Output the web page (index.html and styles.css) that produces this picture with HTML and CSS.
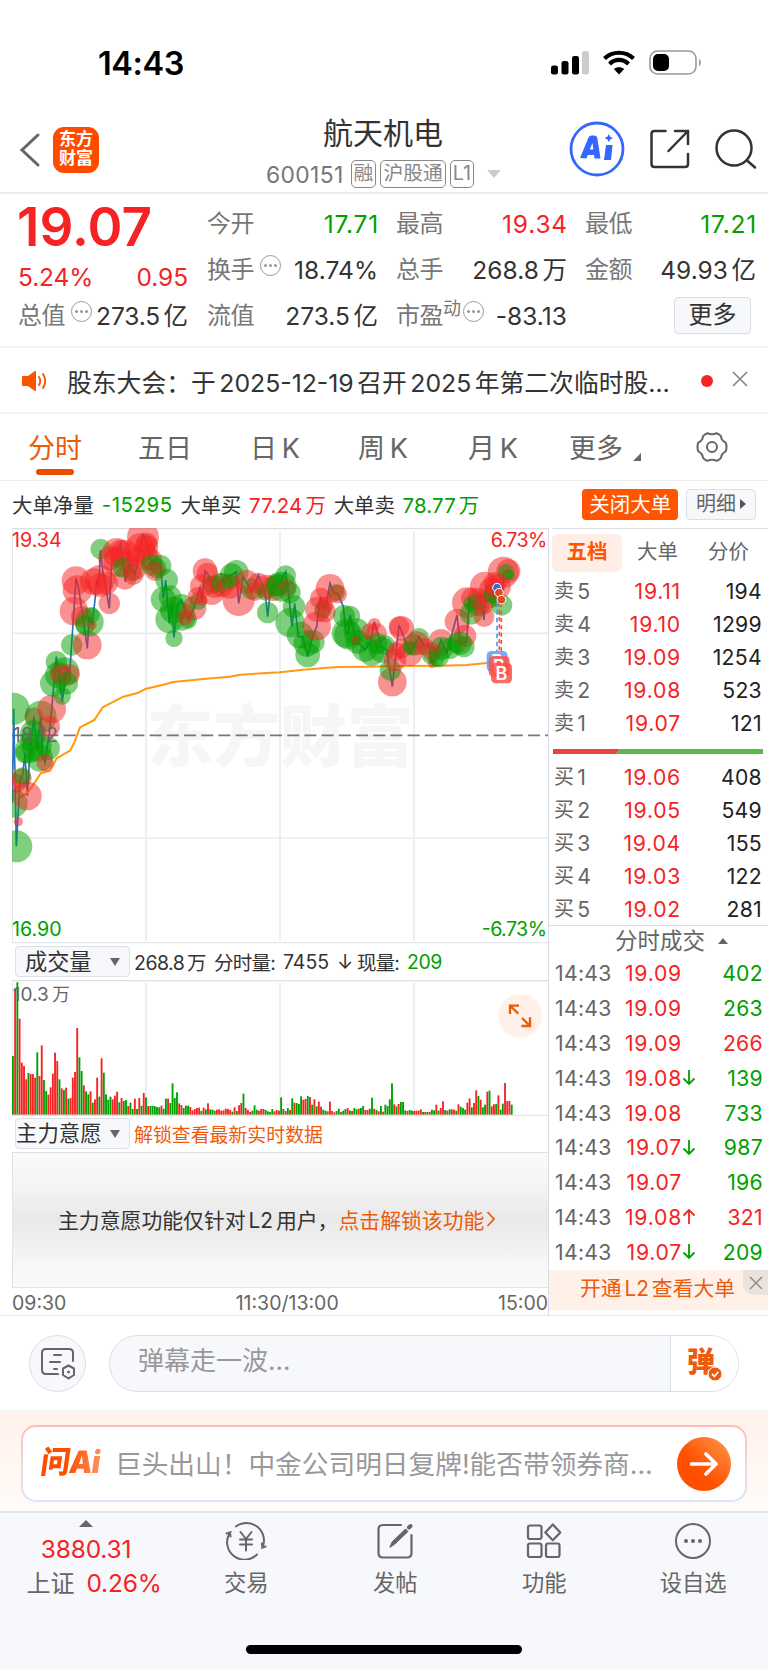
FILE: index.html
```html
<!DOCTYPE html>
<html lang="zh-CN">
<head>
<meta charset="utf-8">
<title>航天机电 600151</title>
<link rel="stylesheet" href="styles.css">
</head>
<body>
<div class="app">
  <header class="status">
    <span class="clock">14:43</span>
    <svg class="status-icons" width="154" height="26" viewBox="0 0 154 26">
      <rect x="0" y="15.500" width="7" height="9" rx="2.300"/><rect x="10.500" y="11" width="7" height="13.500" rx="2.300"/><rect x="21" y="6" width="7" height="18.500" rx="2.300"/><rect x="31" y="1" width="7" height="23.500" rx="2.300" fill="#ccc"/>
      <g fill="none" stroke="#000" stroke-width="4.200"><path d="M53.500 8.500 C61.500 .8 74.500 .8 82.500 8.500"/><path d="M58.500 14 C64 8.600 72 8.600 77.500 14"/></g>
      <path d="M68 24.500 L62.800 19 C65.500 16.800 70.500 16.800 73.200 19Z"/>
      <rect x="99" y="1" width="46" height="23" rx="7.500" fill="none" stroke="#999" stroke-width="1.600"/><rect x="102" y="4" width="16" height="17" rx="5"/><path d="M148 8.500 q3.500 4 0 8z" fill="#999"/>
    </svg>
  </header>

  <nav class="nav">
    <svg class="back" width="22" height="36" viewBox="0 0 22 36"><path d="M19 3 L3 18 L19 33" fill="none" stroke="#666" stroke-width="3" stroke-linecap="round"/></svg>
    <div class="logo"><span>东方</span><span>财富</span></div>
    <div class="title">
      <h1>航天机电</h1>
      <div class="sub"><span class="code">600151</span><b>融</b><b>沪股通</b><b>L1</b><i></i></div>
    </div>
    <svg class="nav-icons" width="190" height="58" viewBox="0 0 190 58">
      <circle cx="28" cy="29" r="26" fill="none" stroke="#3467ff" stroke-width="2.800"/>
      <path fill="#3467ff" fill-rule="evenodd" d="M11 38 L19.500 17.500 Q20.300 15.500 22.500 15.500 H25.500 Q28 15.500 28.300 18 L31.500 38.500 H25.500 L25 35 H18.800 L17.500 38.500ZM20.800 29.500 H24.300 L23.500 23Z"/>
      <path fill="#3467ff" d="M37 25 H43.500 L42 40 H35ZM39.800 14 L41.200 16.700 44 18 41.200 19.400 39.800 22 38.400 19.400 35.600 18 38.400 16.700Z"/>
      <g fill="none" stroke="#333" stroke-width="2.500" stroke-linecap="round"><path d="M96.500 11 H85.500 Q82.500 11 82.500 14 V44 Q82.500 47 85.500 47 H116 Q119 47 119 44 V34 M106 11 H119 V24 M118.500 11.500 L99.500 31"/><circle cx="165" cy="28" r="17.500"/><path d="M178 40.500 L186 47.500"/></g>
    </svg>
  </nav>

  <section class="quote">
    <div class="col first">
      <div class="price">19.07</div>
      <div class="row red"><span>5.24%</span><span>0.95</span></div>
      <div class="row"><label>总值</label><em></em><span>273.5<u>亿</u></span></div>
    </div>
    <div class="col">
      <div class="row"><label>今开</label><span class="green wide">17.71</span></div>
      <div class="row"><label>换手</label><em></em><span>18.74%</span></div>
      <div class="row"><label>流值</label><span>273.5<u>亿</u></span></div>
    </div>
    <div class="col">
      <div class="row"><label>最高</label><span class="red wide">19.34</span></div>
      <div class="row"><label>总手</label><span>268.8<u>万</u></span></div>
      <div class="row"><label>市盈<sup>动</sup></label><em class="tight"></em><span>-83.13</span></div>
    </div>
    <div class="col">
      <div class="row"><label>最低</label><span class="green wide">17.21</span></div>
      <div class="row"><label>金额</label><span>49.93<u>亿</u></span></div>
      <div class="row"><button class="more">更多</button></div>
    </div>
  </section>

  <section class="notice">
    <svg width="28" height="24" viewBox="0 0 28 24"><path fill="#fd5200" d="M2 7 H7 L13.500 2.200 Q15 1.200 15 3 V21 Q15 22.800 13.500 21.800 L7 17 H2 Q1 17 1 16 V8 Q1 7 2 7Z"/><path d="M18 8 Q20.500 12 18 16 M22 5 Q26.500 12 22 19" stroke="#fd5200" stroke-width="1.900" fill="none" stroke-linecap="round"/></svg>
    <span class="notice-text">股东大会：于<u>2025-12-19</u><u>召开</u><u>2025</u><u>年第二次临时股…</u></span>
    <i class="dot"></i>
    <svg width="16" height="16" viewBox="0 0 16 16"><path d="M1 1 L15 15 M15 1 L1 15" stroke="#888" stroke-width="1.700"/></svg>
  </section>

  <nav class="tabs">
    <span class="tab on">分时</span><span class="tab">五日</span><span class="tab">日<u>K</u></span><span class="tab">周<u>K</u></span><span class="tab">月<u>K</u></span><span class="tab corner">更多</span>
    <svg width="32" height="32" viewBox="-16 -16 32 32" fill="none" stroke="#666" stroke-width="2" stroke-linejoin="round"><path d="M-4.500 -13.800 Q0 -11.500 4.500 -13.800 Q7 -13 9 -10.800 Q9.300 -6.500 13.800 -4.300 Q15.200 0 13.800 4.300 Q9.300 6.500 9 10.800 Q7 13 4.500 13.800 Q0 11.500 -4.500 13.800 Q-7 13 -9 10.800 Q-9.300 6.500 -13.800 4.300 Q-15.200 0 -13.800 -4.300 Q-9.300 -6.500 -9 -10.800 Q-7 -13 -4.500 -13.800Z"/><circle r="5"/></svg>
  </nav>

  <section class="bigorder">
    <span class="fit" data-w="82">大单净量</span><span class="fit green" data-w="71">-15295</span><span class="fit" data-w="61">大单买</span><span class="fit red" data-w="77">77.24<u>万</u></span><span class="fit" data-w="61">大单卖</span><span class="fit green" data-w="77">78.77<u>万</u></span>
    <button class="close-big">关闭大单</button><button class="detail">明细<i></i></button>
  </section>

  <main class="market">
    <div class="left">
      <svg id="price" class="price-chart" viewBox="36 24 1611 1248"></svg>
      <div class="ind-head">
        <div class="select wide">成交量<i></i></div>
        <span class="fit" data-w="72">268.8<u>万</u></span><span class="fit" data-w="61">分时量:</span><span class="fit" data-w="46">7455</span><span class="fit" data-w="12">↓</span><span class="fit" data-w="42">现量:</span><span class="fit green" data-w="35">209</span>
      </div>
      <svg id="volume" class="volume-chart" viewBox="36 150 1611 408"></svg>
      <div class="ind-head second">
        <div class="select">主力意愿<i></i></div>
        <span class="orange unlock">解锁查看最新实时数据</span>
      </div>
      <div class="locked"><span>主力意愿功能仅针对<u>L2</u><u>用户，</u></span><span class="orange">点击解锁该功能</span><svg width="10" height="16" viewBox="0 0 10 16"><path d="M1.500 1 L8 8 L1.500 15" fill="none" stroke="#ec5b0c" stroke-width="1.800"/></svg></div>
      <div class="times"><span>09:30</span><span>11:30/13:00</span><span>15:00</span></div>
    </div>
    <aside class="right">
      <div class="book-tabs"><b>五档</b><span>大单</span><span>分价</span></div>
      <div class="book" id="sell"></div>
      <svg class="ratio" width="210" height="5" viewBox="0 0 210 5"><path fill="#eb4343" d="M0 0H67L63 5H0Z"/><path fill="#5aba45" d="M67 0H210V5H63Z"/></svg>
      <div class="book" id="buy"></div>
      <div class="ticks-head">分时成交<i></i></div>
      <div class="ticks" id="ticks"></div>
      <div class="promo">开通<u>L2</u><u>查看大单</u><div class="promo-x"><svg width="14" height="14" viewBox="0 0 14 14"><path d="M1 1 L13 13 M13 1 L1 13" stroke="#888" stroke-width="1.400"/></svg></div></div>
    </aside>
  </main>

  <section class="comment">
    <div class="round"><svg width="36" height="34" viewBox="0 0 36 34" fill="none" stroke="#666" stroke-width="2" stroke-linecap="round"><path d="M18 27 H6 Q2 27 2 23 V6 Q2 2 6 2 H29 Q33 2 33 6 V14 M14 8 H21 M10 15 H20 M14 22 H17"/><path d="M28.500 18.500 L34 21.500 V28 L28.500 31.500 L23 28 V21.500Z" stroke-linejoin="round"/><circle cx="28.500" cy="25" r="1" fill="#666" stroke-width="1"/></svg></div>
    <div class="input"><span>弹幕走一波...</span><div class="dan">弹<svg width="16" height="16" viewBox="-1 -1 16 16"><circle cx="7" cy="7" r="7" fill="#ec5b0c" stroke="#fff"/><path d="M4 7 L6.500 9.500 L10.300 4.800" fill="none" stroke="#fff" stroke-width="1.800"/></svg></div></div>
  </section>

  <section class="ai">
    <div class="ai-box">
      <span class="ai-logo">问Ai</span>
      <span class="ai-text">巨头出山！中金公司明日复牌!能否带领券商...</span>
      <div class="go"><svg width="28" height="26" viewBox="0 0 28 26"><path d="M1.500 13 H26 M16 3 L26 13 L16 23" fill="none" stroke="#fff" stroke-width="3.600" stroke-linecap="round" stroke-linejoin="round"/></svg></div>
    </div>
  </section>

  <footer class="bottom">
    <div class="index"><i></i><div class="red">3880.31</div><div>上证<span class="red">0.26%</span></div></div>
    <div class="item"><svg width="44" height="38" viewBox="-22 -19 44 38" fill="none" stroke="#666" stroke-width="2" stroke-linecap="round"><path d="M-10 -14.500 A17.500 17.500 0 0 1 16.500 6.500 L19.500 5.500 M16.500 6.500 L15.800 2.500 M11 13.500 A17.500 17.500 0 0 1 -16 -8.500 L-19.500 -7.500 M-16 -8.500 L-15.500 -4.500 M-5.500 -9 L0 -2 L5.500 -9 M0 -2 V9.500 M-6 -1.500 H6 M-6 3.500 H6"/></svg>交易</div>
    <div class="item"><svg width="44" height="38" viewBox="-22 -19 44 38" fill="none" stroke="#666" stroke-width="2.200" stroke-linecap="round"><path d="M6 -16 H-12 Q-16.500 -16 -16.500 -11.500 V12 Q-16.500 16.500 -12 16.500 H12 Q16.500 16.500 16.500 12 V-6"/><path d="M-5 6 L-3 1 L10.500 -12 L13 -9.500 L0 3Z" fill="#666" stroke-width="1"/><path d="M14 -13.500 L15.500 -15" stroke-width="4"/></svg>发帖</div>
    <div class="item"><svg width="44" height="38" viewBox="-22 -19 44 38" fill="none" stroke="#666" stroke-width="2.200" stroke-linejoin="round"><rect x="-16" y="-15.500" width="13.500" height="13.500" rx="2"/><rect x="-16" y="2.500" width="13.500" height="13.500" rx="2"/><rect x="2" y="2.500" width="13.500" height="13.500" rx="2"/><path d="M8.800 -16.500 L16.300 -8.500 L8.800 -.8 L1.300 -8.500Z"/></svg>功能</div>
    <div class="item"><svg width="44" height="38" viewBox="-22 -19 44 38"><circle r="17" fill="none" stroke="#666" stroke-width="2"/><g fill="#666"><circle cx="-7" r="2"/><circle r="2"/><circle cx="7" r="2"/></g></svg>设自选</div>
    <div class="home"></div>
  </footer>
</div>
<script src="app.js"></script>
</body>
</html>
```
FILE: styles.css
```css
* { box-sizing: border-box; margin: 0; padding: 0; }
body { background: #fff; color: #333; font-family: Inter, "Noto Sans CJK SC", sans-serif; font-size: 24px; }
.app { width: 768px; height: 1670px; overflow: hidden; display: flex; flex-direction: column; white-space: nowrap; }
.app > * { flex: none; }
svg { display: block; flex: none; }
i, em { font-style: normal; flex: none; }
u { text-decoration: none; margin-left: .14em; }
button { font: inherit; color: inherit; border: 0; }
.red { color: #f52323; }
.green { color: #00a000; }
.orange { color: #ec5b0c; }

.status { height: 100px; padding: 50px 67px 0 98px; display: flex; justify-content: space-between; }
.status-icons { width: 154px; margin-right: -4px; }
.clock { font-size: 32.500px; line-height: 27px; font-weight: 600; color: #000; letter-spacing: -.4px; }

.nav { height: 94px; padding-left: 19px; display: flex; align-items: flex-start; border-bottom: 2px solid #ececec; }
.back { margin-top: 32px; }
.logo { width: 46px; height: 46px; margin: 27px 0 0 12px; background: #ff4a00; border-radius: 11px; color: #fff; font-weight: 700; font-size: 17px; line-height: 19px; padding-top: 3px; display: flex; flex-direction: column; align-items: center; }
.title { width: 366px; margin-left: 101px; display: flex; flex-direction: column; align-items: center; }
.title h1 { font-size: 30px; font-weight: 400; line-height: 34px; margin-top: 16px; }
.sub { display: flex; align-items: center; gap: 4px; height: 30px; margin-top: 9px; color: #888; padding-left: 1px; }
.code { font-size: 22.800px; letter-spacing: .4px; color: #777; margin-right: 3px; }
.sub b { font-weight: 400; font-size: 19.800px; line-height: 25px; height: 28px; border: 1.500px solid #888; border-radius: 5px; padding: 0 2px; }
.sub i { margin-left: 9px; border: 7px solid transparent; border-top: 8px solid #ccc; border-bottom: 0; }
.nav-icons { margin: 20px 0 0 3px; }

.quote { height: 154px; padding: 7px 0 0 18px; display: flex; gap: 18px; border-bottom: 2px solid #f4f4f4; }
.col { width: 171px; }
.row { height: 46px; display: flex; align-items: center; justify-content: space-between; line-height: 46px; font-size: 24.500px; letter-spacing: .05px; }
.row .wide { letter-spacing: .8px; margin-right: -1px; }
.row label { font-size: 24px; color: #777; letter-spacing: -.5px; }
.row sup { font-size: 18px; line-height: 10px; vertical-align: 9px; }
.row em { width: 21px; height: 21px; border: 1.500px solid #999; border-radius: 50%; margin: -9px auto 0 6px; display: grid; place-items: center; }
.row em.tight { margin-left: 2px; }
.row em::before { content: ""; width: 3px; height: 3px; border-radius: 50%; background: #999; box-shadow: -5px 0 #999, 5px 0 #999; }
.price { height: 52px; line-height: 52px; font-size: 53px; font-weight: 600; color: #f52323; letter-spacing: .1px; margin-left: -1px; }
.first .row { width: 170px; letter-spacing: -.1px; }
.first .row:nth-child(2) { height: 47px; padding-top: 1px; }
.first .row:last-child { height: 31px; }
.more { margin-left: auto; margin: -2px 5px 0 auto; width: 77px; height: 37px; line-height: 34px; font-size: 24px; border: 1px solid #d9dce3; border-radius: 4px; background: #f7f8fb; }

.notice { height: 66px; display: flex; align-items: center; padding: 1px 20px 0 20px; border-bottom: 2px solid #f4f4f4; }
.notice > svg:first-child { margin-left: 1px; }
.notice-text { width: 652px; padding-left: 18px; font-size: 24.800px; }
.dot { width: 12px; height: 12px; border-radius: 50%; background: #f52323; margin: 0 auto 0 0; }
.notice > svg:last-child { margin-top: -3px; }

.tabs { height: 67px; display: flex; align-items: center; font-size: 27px; color: #666; border-bottom: 1px solid #eee; padding-left: 28px; }
.tab { height: 66px; line-height: 67px; padding-top: 1px; flex: none; width: 110px; position: relative; }
.tab.on { color: #ec5b0c; }
.tab.on::after { content: ""; position: absolute; left: 8px; bottom: 5px; width: 38px; height: 6px; border-radius: 3px; background: #ec4e00; }
.tab:nth-child(3) { width: 108px; margin-left: 2px; }
.tab:nth-child(5) { width: 101px; }
.tab.corner { width: 127px; }
.corner::after { content: ""; position: absolute; left: 64px; top: 39px; border-left: 8px solid transparent; border-bottom: 8px solid #666; }
.tabs u { margin-left: .18em; }

.bigorder { height: 47px; padding: 0 12px 1px 12px; display: flex; align-items: center; gap: 7.700px; font-size: 20.400px; }
.close-big { margin-left: auto; width: 96px; height: 31px; border-radius: 4px; background: #ff5500; color: #fff; font-size: 20.500px; line-height: 29px; }
.detail { width: 70px; height: 31px; border: 1px solid #dcdfe5; border-radius: 4px; background: #f7f8fb; color: #666; font-size: 20px; line-height: 28px; display: flex; align-items: center; justify-content: center; gap: 4px; }
.detail i { border: 5px solid transparent; border-left: 6px solid #555; border-right: 0; }

.market { display: flex; height: 788px; border-bottom: 1px solid #e4e4ea; }
.left { width: 548px; padding-left: 12px; }
.left > * { margin-right: -1px; }
.price-chart { width: 537px; height: 416px; }
.ind-head { height: 36px; display: flex; align-items: center; gap: 8px; font-size: 19.500px; padding: 0 0 1px 3px; }
.select { width: 115px; height: 31px; margin-right: -4px; background: #f7f8fb; border: 1.500px solid #dcdfe5; border-radius: 4px; font-size: 21.400px; line-height: 27px; padding: 0 9px 0 0; display: flex; align-items: center; justify-content: space-between; }
.select.wide { padding-left: 9px; font-size: 22.200px; }
.select i { border: 5px solid transparent; border-top: 8px solid #666; border-bottom: 0; }
.volume-chart { width: 537px; height: 136px; }
.unlock { font-size: 18.900px; }
.second { height: 36px; }
.locked { height: 136px; border: 1px solid #e2e4ea; border-top-color: #dcdfe5; background: linear-gradient(#fafafa 0%, #f4f4f4 25%, #e9e9e9 50%, #f0f0f0 68%, #f8f8f8 85%, #f9f9f9 100%); display: flex; align-items: center; padding: 0 0 2px 45px; font-size: 20.850px; }
.locked svg { margin-left: 2px; }
.times { height: 28px; display: flex; align-items: center; justify-content: space-between; padding: 2px 1px 0 0; font-size: 19.500px; color: #666; }
.times span:nth-child(2) { margin-left: 10px; }

.right { width: 220px; border-left: 1px solid #d9dce3; padding-left: 3px; }
.book-tabs { height: 47px; padding: 5px 0 0; border-top: 1px solid #dcdfe5; display: flex; color: #666; font-size: 20.500px; line-height: 36px; }
.book-tabs b { width: 70px; height: 38px; text-align: center; border-radius: 6px; background: #ffeee6; color: #ff5500; }
.book-tabs span { width: 71px; text-align: center; }
.line { display: grid; grid-template-columns: 66px 61px 1fr; align-items: center; height: 32.800px; padding: 0 6px 0 2px; font-size: 21.200px; color: #222; letter-spacing: .3px; }
.line > :nth-child(1) { color: #666; }
.line > :nth-child(2) { text-align: right; color: #f52323; letter-spacing: .75px; }
.line > :nth-child(3) { text-align: right; }
.line label { font-size: 20px; display: flex; align-items: center; line-height: 30px; }
.line label u { font-size: 21.200px; margin-left: 3px; }
.ratio { margin: 10px 0 7px 1px; }
.ticks-head { margin-left: -3px; height: 31px; border-top: 1.500px solid #d9dce3; color: #666; font-size: 22.500px; line-height: 30px; padding-left: 66px; display: flex; align-items: center; }
.ticks-head i { margin-left: 13px; border: 5px solid transparent; border-bottom: 6px solid #666; border-top: 0; }
.ticks .line { height: 34.800px; grid-template-columns: 66px 61px 18px 1fr; padding: 0 5px 0 3px; }
.ticks .line > :nth-child(4) { text-align: right; }
.ticks .line svg { margin-left: 0; }
.promo { margin: 1px 0 0 -3px; height: 40px; background: #fff0e8; color: #ec5b0c; font-size: 20.800px; line-height: 37px; padding-left: 31px; position: relative; }
.promo-x { position: absolute; right: 0; top: 0; width: 25px; height: 25px; background: #ebe2de; border-bottom-left-radius: 12px; display: grid; place-items: center; }

.comment { height: 94px; padding: 1px 29px 0; display: flex; align-items: center; gap: 23px; }
.round { width: 57px; height: 57px; border-radius: 50%; background: #f7f8fb; border: 1px solid #dcdfe5; display: grid; place-items: center; }
.input { width: 630px; height: 57px; border: 1px solid #dcdfe5; border-radius: 29px; background: #f7f8fb; overflow: hidden; display: flex; justify-content: space-between; color: #999; font-size: 26px; line-height: 50px; padding-left: 28px; }
.dan { width: 68px; border-left: 1px solid #dcdfe5; background: #fff; color: #ec5b0c; font-size: 28px; font-weight: 800; line-height: 52px; padding-left: 16px; position: relative; }
.dan svg { position: absolute; left: 36px; top: 30px; }

.ai { height: 101px; padding: 14px 21px 0; border-top: 1px solid #f2f2f2; background: linear-gradient(#fff1ec, #fffcf8); }
.ai-box { height: 77px; border: 2px solid transparent; border-radius: 15px; background: linear-gradient(#fff, #fff) padding-box, linear-gradient(#ffbdb3, #e7dbe5 60%, #dbe5fa) border-box; display: flex; align-items: center; padding: 0 14px 0 15px; }
.ai-logo { flex: none; width: 62px; margin: -4px 0 0 3px; line-height: 40px; font-size: 31px; font-weight: 900; letter-spacing: -1px; transform: skewX(-8deg) scaleX(.95); transform-origin: left; background: linear-gradient(90deg, #ff4d00 45%, #ff9060); background-clip: text; color: transparent; }
.ai-text { flex: none; padding: 0 0 3px 12px; font-size: 26.700px; color: #999; }
.go { flex: none; margin-left: auto; width: 54px; height: 54px; border-radius: 50%; background: linear-gradient(45deg, #ff5000 40%, #ff9a50); display: grid; place-items: center; }

.bottom { height: 160px; background: #f7f8fb; border-top: 2px solid #e4e7e8; display: grid; grid-template-columns: 172px 148.700px 149px 149px 149px; grid-template-rows: 132px 28px; color: #666; font-size: 22.300px; }
.index { display: flex; flex-direction: column; align-items: center; font-size: 24px; padding-top: 7px; line-height: 34px; }
.index i { border: 7px solid transparent; border-bottom: 7px solid #666; border-top: 0; }
.index .red { font-size: 24.500px; letter-spacing: -.2px; }
.index div:nth-child(2) { margin-top: 5px; }
.index div span { margin-left: 12px; }
.index div:last-child { margin-left: 16px; }
.item { display: flex; flex-direction: column; align-items: center; padding-top: 9px; line-height: 34px; }
.item svg { margin-bottom: 6px; }
.home { grid-column: 1 / -1; justify-self: center; width: 276px; height: 9px; border-radius: 5px; background: #000; }
```
FILE: app.js
```js
const NS = 'http://www.w3.org/2000/svg';
const RED = '#f52323', GREEN = '#00a000';
function add(svg, tag, attrs, text) {
  const e = document.createElementNS(NS, tag);
  for (const k in attrs) e.setAttribute(k, attrs[k]);
  if (text) e.textContent = text;
  svg.appendChild(e);
  return e;
}
function line(svg, x1, y1, x2, y2, stroke, width, extra) {
  add(svg, 'line', Object.assign({ x1, y1, x2, y2, stroke, 'stroke-width': width }, extra));
}

// Price chart, three units per pixel
const p = document.getElementById('price');
add(p, 'text', { x: 440, y: 722, 'font-size': 200, textLength: 800, 'font-weight': 900, fill: '#f6f6f6' }, '东方财富');
[438, 840, 1242].forEach(x => line(p, x, 32, x, 1262, '#e9ebf2', 5));
[340, 954].forEach(y => line(p, 36, y, 1644, y, '#e9ebf2', 5));
line(p, 36, 26, 1647, 26, '#dcdfe5', 4);
line(p, 37, 26, 37, 1268, '#e4e6ec', 4);
line(p, 36, 1268, 1647, 1268, '#e4e6ec', 4);
line(p, 36, 646, 1644, 646, '#777', 5, { 'stroke-dasharray': '36 15.600' });
const prices = '37,850 41,566 49,979 60,780 68,765 75,700 82,828 90,690 102,590 110,690 122,590 128,710 135,728 148,640 155,567 169,410 178,470 187,545 200,440 209,463 228,175 236,205 250,300 262,385 268,290 276,315 285,240 290,185 296,195 302,90 308,150 328,265 335,130 350,97 362,70 376,185 390,120 405,165 415,110 429,45 440,70 455,130 482,140 490,235 497,180 508,310 515,250 522,352 532,260 545,240 565,300 583,264 600,200 605,240 615,152 625,165 637,215 665,180 695,165 709,155 716,250 730,170 755,215 775,165 795,215 803,290 812,200 835,195 857,155 866,220 876,320 884,250 895,350 908,350 923,410 938,350 950,320 962,230 975,270 990,190 1002,220 1013,220 1030,260 1038,340 1045,340 1050,285 1068,360 1095,390 1110,370 1123,305 1145,380 1160,390 1177,500 1197,315 1215,360 1230,400 1257,350 1275,380 1285,370 1297,430 1323,360 1340,400 1371,285 1380,370 1400,365 1408,235 1425,250 1440,220 1452,300 1458,200 1480,190 1505,240 1512,155 1530,150';
add(p, 'polyline', { points: prices, fill: 'none', stroke: '#2b6fc7', 'stroke-width': 5 });
add(p, 'polyline', { points: '41,750 50,800 62,832 85,815 108,782 122,760 150,752 170,715 210,692 222,670 240,622 283,600 308,562 370,530 415,518 438,506 490,494 520,486 610,477 690,470 720,464 840,457 910,449 1010,441 1100,440 1190,438 1320,437 1400,435 1460,429 1510,422', fill: 'none', stroke: '#ff9a10', 'stroke-width': 6, 'stroke-linejoin': 'round' });
const dots = `G41,566,48 R50,790,28 G40,850,43 R82,828,43 R55,905,14 G49,979,48 R65,775,30 G67,768,26
G85,690,40 R102,590,28 G122,590,48 G100,640,40 G110,680,45 G145,685,35 G120,715,40 R135,728,26 R148,620,32 R155,567,43 G75,700,30 G95,660,35
G169,425,32 G160,490,40 G195,455,43 G175,465,40 R180,463,30 R209,463,31 G187,528,26 G200,490,34
G215,375,32 R262,375,43 R222,273,43 G268,306,43 R245,290,32 G255,315,30 R276,315,14 G275,285,24
R228,182,43 R232,210,44 R280,185,40 R300,180,45 R300,195,36 R320,190,34 R328,250,32 G302,87,31
R350,97,43 R330,115,36 R375,105,45 R355,125,45 R360,95,36 R375,175,34 G368,143,30 G398,158,26 R405,145,35 R400,165,30
R429,50,48 R420,85,45 R440,80,35 R435,110,40 R410,110,30 R440,70,32 R455,120,32 G455,135,32 G482,137,32 G470,145,30 R465,153,30 G500,180,34
G490,238,38 G510,230,34 G508,298,42 G520,270,40 G545,260,38 G522,355,26 G545,290,42 G565,300,26 R555,292,24 R583,264,36 G595,243,26 R590,228,26 R608,242,15
R615,152,37 R622,160,32 R605,198,35 G637,195,28 R645,200,34 R635,215,40 R665,195,36 G665,188,30 G695,165,35 G709,157,37 R690,200,36 G690,185,25 R716,240,48 R740,185,36 G755,207,32 R775,190,32 R765,215,28 R800,200,36 G795,217,25 G803,278,32 G830,195,35
R820,205,38 G835,195,32 G845,200,45 G857,167,31 R862,204,25 G870,218,32 G882,260,34 G870,308,44 G900,345,40 G920,370,40 G923,405,37 G938,365,36 R950,318,43 R953,268,38 R962,235,32 G970,268,26 R975,275,32 R990,205,43 R975,255,25 G1010,218,25 R1013,222,28
G1032,288,33 G1050,288,31 G1038,340,43 G1045,345,43 G1070,335,40 G1072,365,36 R1068,362,14 G1095,385,40 R1110,335,26 R1123,313,19 R1130,340,31 G1115,400,38 G1130,370,32 G1145,390,38 G1155,375,30
R1177,486,43 G1171,450,32 R1197,320,31 R1205,325,37 R1185,420,34 R1188,395,28 R1205,385,30 R1230,400,38 G1257,355,31 G1240,375,32 R1250,370,36 G1230,385,20 R1275,380,26 R1297,430,14 G1293,405,28 G1315,410,32 R1323,365,38 G1325,385,35 R1295,395,28 G1350,385,32 G1310,415,24 G1370,370,30 G1392,380,32 R1395,348,34 R1372,304,38 G1380,370,35
R1402,248,46 R1415,235,32 G1414,280,34 G1415,250,25 R1435,235,32 G1435,255,34 R1452,290,31 R1455,200,45 R1450,255,30 R1475,210,38 R1470,235,30 G1475,225,25 G1505,255,32 R1485,190,34 R1510,157,47 R1525,153,36 G1518,157,25 G1530,167,14 G1490,235,25 R1495,200,38`;
dots.split(/\s+/).forEach(d => {
  const [x, y, r] = d.slice(1).split(',');
  add(p, 'circle', { cx: x, cy: y, r, fill: d[0] === 'R' ? RED : GREEN, 'fill-opacity': .5 });
});
line(p, 1491, 245, 1491, 395, '#4f97ff', 5, { 'stroke-dasharray': '14 10' });
line(p, 1498, 225, 1498, 410, '#ff4b3a', 5, { 'stroke-dasharray': '12 10' });
line(p, 1504, 250, 1504, 430, '#ff4b3a', 5, { 'stroke-dasharray': '12 10' });
[[1491, 203, '#2f6fd0'], [1497, 218, '#e04a20'], [1504, 239, '#e04a20']].forEach(([cx, cy, fill]) => add(p, 'circle', { cx, cy, r: 13, fill, stroke: '#fff', 'stroke-width': 3 }));
[[1460, 393, '#5a9fff'], [1466, 408, '#ff5145'], [1473, 428, '#ff5145']].forEach(([x, y, fill]) => {
  add(p, 'rect', { x, y, width: 63, height: 62, rx: 14, fill, 'fill-opacity': .85 });
  add(p, 'text', { x: x + 31, y: y + 51, 'font-size': 54, 'font-weight': 600, 'text-anchor': 'middle', fill: '#fff' }, 'B');
});
[[36, 81, RED, '19.34', 149], [38, 665, '#666', '18.12', 136], [36, 1247, GREEN, '16.90', 149], [1472, 82, RED, '6.73%', 170], [1445, 1247, GREEN, '-6.73%', 196]].forEach(([x, y, fill, t, w]) => add(p, 'text', { x, y, fill, 'font-size': 59, textLength: w }, t));

// Volume bars: colour letter followed by height, one per minute
const v = document.getElementById('volume');
[438, 840, 1242].forEach(x => line(v, x, 157, x, 554, '#e9ebf2', 5));
line(v, 36, 152, 1647, 152, '#dcdfe5', 4);
line(v, 37, 152, 37, 555, '#e4e6ec', 3);
line(v, 36, 556, 1647, 556, '#dcdfe5', 3);
const bars = 'g176r376g397r288r156r146r106g125r122r122r111g187r116r208g104g71r60r82r123r186r161g106r79g74r81g48r50r111r128r260g172g131r88g70g61r70g36r46r111g54r169g126g61g45g54r46r57r69g37r50g41g44r26g36g17r48g17r50g27r65g52r26g26g26g26g23g22r27g18g48r48g35g94g50g67r34r29g20g27g27r23r13r17r20r21g11r21g16r34g16g15g12r15r16r12r13r18r17r14g9r22g11r28r35g63r20r14r8g12g28g15r12r17r17g14g10g8g17r10r14r12g52g17r11g20r14g49r36g35g32g55r45r47g56r53g30r46g25r39r24g15g12r10r39r11r7g11g18r8g12g17r20g13r11g20g16r18g20g26r14r14g18g51r18g14r10g26r9g30g26g46g94r31g25r32g38g38g13r11g14g12r11r12r12r16g8r8g8r8g15g13r30g12r20r40g14r12g16r16r15g12r31g24g20g15r36r49g22r35r73g56r45g22g30r69g72r25r31g32r58g15g33r95r41r41g30';
bars.match(/[rg]\d+/g).forEach((b, i) => {
  const h = +b.slice(1);
  add(v, 'rect', { x: 36 + i * 6.65, y: 554 - h, width: 5.6, height: h, fill: b[0] === 'r' ? RED : GREEN });
});
add(v, 'text', { x: 38, y: 213, fill: '#666', 'font-size': 57, textLength: 108 }, '10.3');
add(v, 'text', { x: 157, y: 213, fill: '#666', 'font-size': 53 }, '万');
add(v, 'circle', { cx: 1561, cy: 257, r: 66, fill: '#fff0ea' });
add(v, 'path', { d: 'M1530 252 V227 H1557 M1531 228 L1555 251 M1590 262 V288 H1564 M1589 287 L1566 264', fill: 'none', stroke: '#ec5b0c', 'stroke-width': 7 });

// Order book and ticks
function book(id, side, rows) {
  document.getElementById(id).innerHTML = rows.map(r => `<div class="line"><label>${side}<u>${r[0]}</u></label><span>${r[1]}</span><span>${r[2]}</span></div>`).join('');
}
book('sell', '卖', [[5, '19.11', 194], [4, '19.10', 1299], [3, '19.09', 1254], [2, '19.08', 523], [1, '19.07', 121]]);
book('buy', '买', [[1, '19.06', 408], [2, '19.05', 549], [3, '19.04', 155], [4, '19.03', 122], [5, '19.02', 281]]);
const arrows = {
  d: '<svg width="14" height="17" viewBox="0 0 14 17"><path d="M7 1 V15 M1.500 9.500 L7 15 L12.500 9.500" fill="none" stroke="#00a000" stroke-width="1.800"/></svg>',
  u: '<svg width="14" height="17" viewBox="0 0 14 17"><path d="M7 16 V2 M1.500 7.500 L7 2 L12.500 7.500" fill="none" stroke="#f52323" stroke-width="1.800"/></svg>'
};
document.getElementById('ticks').innerHTML = [['19.09', '', 402], ['19.09', '', 263], ['19.09', '', 266, 1], ['19.08', 'd', 139], ['19.08', '', 733], ['19.07', 'd', 987], ['19.07', '', 196], ['19.08', 'u', 321, 1], ['19.07', 'd', 209]]
  .map(t => `<div class="line"><span>14:43</span><span>${t[0]}</span><span>${arrows[t[1]] || ''}</span><span class="${t[3] ? 'red' : 'green'}">${t[2]}</span></div>`).join('');

// Spread label text across its allotted column width
document.querySelectorAll('.fit').forEach(e => {
  const w = +e.dataset.w, n = e.textContent.length;
  e.style.letterSpacing = ((w - e.getBoundingClientRect().width) / n) + 'px';
});
```
